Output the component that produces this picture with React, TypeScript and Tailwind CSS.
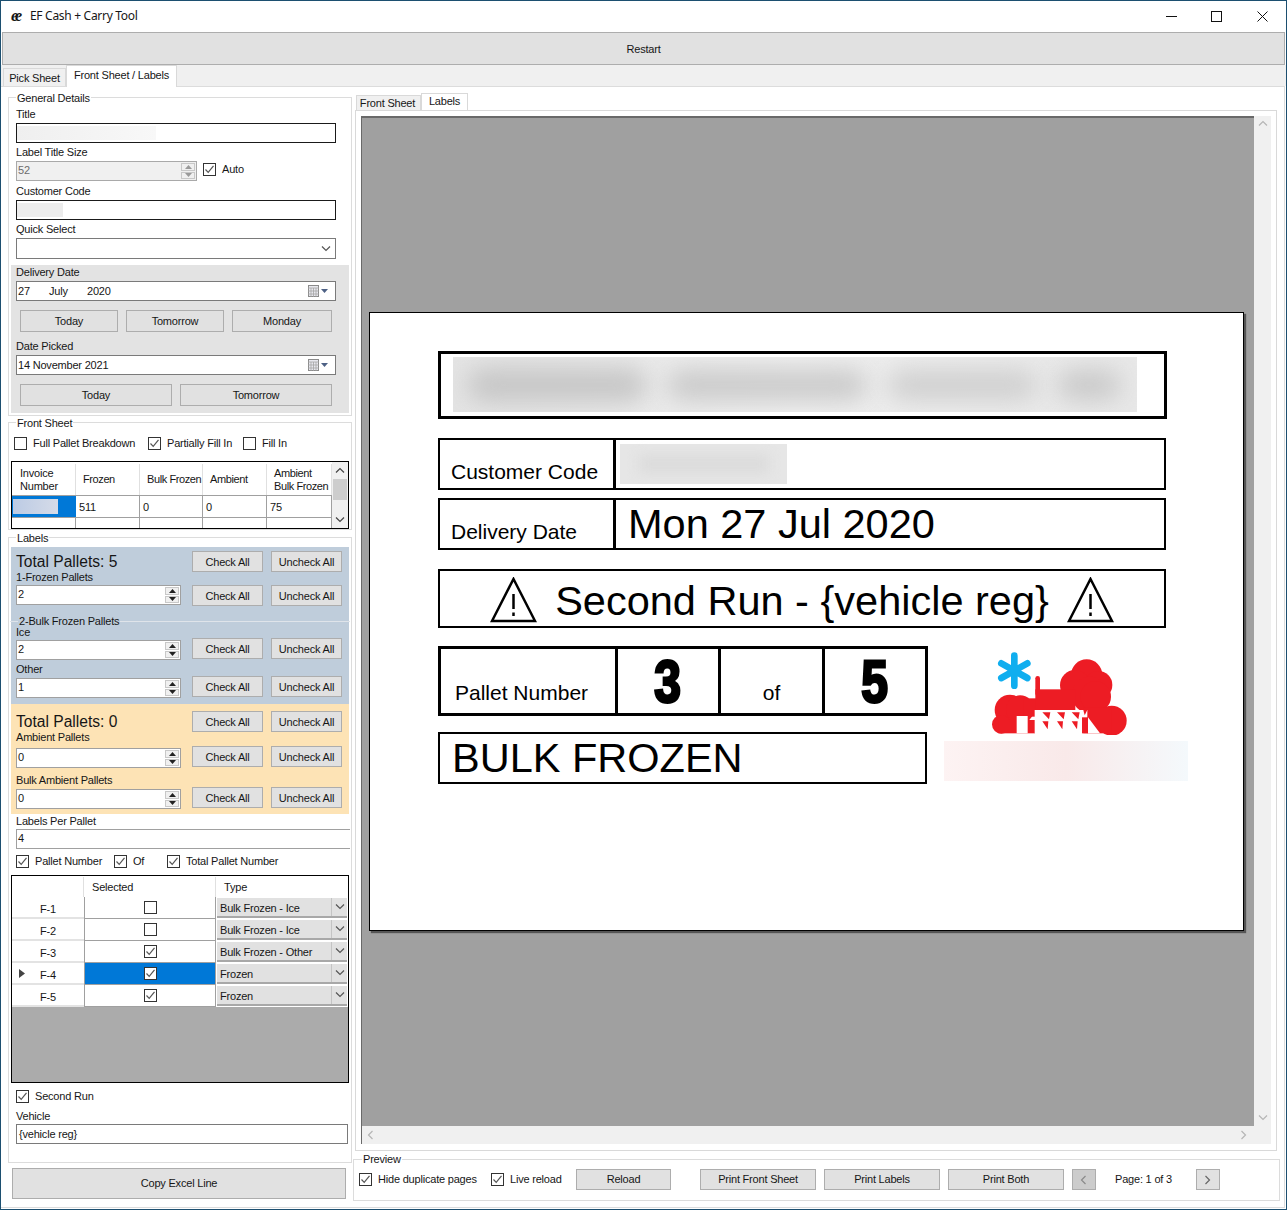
import type { ReactNode } from "react";

// EF Cash + Carry Tool: WinForms window, front sheet / labels tab

function Check({ on, className = "" }: { on?: boolean; className?: string }) {
  return (
    <span className={`flex h-[13px] w-[13px] shrink-0 items-center justify-center border border-[#333] bg-white ${className}`}>
      {on && (
        <svg width="11" height="11" viewBox="0 0 11 11" fill="none">
          <path d="M1.5 5.5 L4.2 8.4 L9.5 1.8" stroke="#555" strokeWidth="1.2" />
        </svg>
      )}
    </span>
  );
}

function CheckLabel({ on, text, className = "" }: { on?: boolean; text: string; className?: string }) {
  return (
    <div className={`flex h-[13px] items-center whitespace-nowrap ${className}`}>
      <Check on={on} />
      <span className="ml-[6px]">{text}</span>
    </div>
  );
}

function Btn({ children, className = "", bg = "bg-[#e1e1e1]" }: { children: ReactNode; className?: string; bg?: string }) {
  return (
    <div className={`flex shrink-0 items-center justify-center border border-[#adadad] ${bg} ${className}`}>
      {children}
    </div>
  );
}

function Chevron({ dir = "down", color = "#555" }: { dir?: "down" | "up" | "left" | "right"; color?: string }) {
  const d = {
    down: "M1 2.5 L5 6.5 L9 2.5",
    up: "M1 6.5 L5 2.5 L9 6.5",
    left: "M6.5 1 L2.5 5 L6.5 9",
    right: "M2.5 1 L6.5 5 L2.5 9",
  }[dir];
  return (
    <svg width="10" height="10" viewBox="0 0 10 10" fill="none">
      <path d={d} stroke={color} strokeWidth="1.2" />
    </svg>
  );
}

function Spinner({ disabled }: { disabled?: boolean }) {
  const fill = disabled ? "#9a9a9a" : "#222";
  return (
    <div className="flex h-full w-[15px] shrink-0 flex-col gap-px py-px pr-px">
      <div className="flex flex-1 items-center justify-center border border-[#c8c8c8] bg-[#f0f0f0]">
        <svg width="7" height="4" viewBox="0 0 7 4"><path d="M3.5 0 L7 4 L0 4 Z" fill={fill} /></svg>
      </div>
      <div className="flex flex-1 items-center justify-center border border-[#c8c8c8] bg-[#f0f0f0]">
        <svg width="7" height="4" viewBox="0 0 7 4"><path d="M0 0 L7 0 L3.5 4 Z" fill={fill} /></svg>
      </div>
    </div>
  );
}

function NumBox({ value, className = "" }: { value: string; className?: string }) {
  return (
    <div className={`flex h-[20px] w-[165px] shrink-0 items-center border border-[#a0a0a0] bg-white pl-[1px] ${className}`}>
      <span className="flex-1 -translate-y-px">{value}</span>
      <Spinner />
    </div>
  );
}

function DatePicker({ children, className = "" }: { children: ReactNode; className?: string }) {
  return (
    <div className={`ml-[5px] flex h-[20px] w-[320px] items-center border border-[#7a7a7a] bg-white pl-[1px] pr-[5px] ${className}`}>
      <span className="flex flex-1 whitespace-pre">{children}</span>
      <svg width="22" height="12" viewBox="0 0 22 12">
        <rect x="0.5" y="0.5" width="10" height="11" fill="#e8e8ee" stroke="#8a8a8a" />
        <path d="M0 3 H11 M3 3 V12 M5.500 3 V12 M8 3 V12 M0 6 H11 M0 9 H11" stroke="#a5a5a5" strokeWidth="0.8" />
        <path d="M13 4 H20 L16.500 8 Z" fill="#4d6185" />
      </svg>
    </div>
  );
}

function Group({ title, className = "", legendClass = "left-[7px] -top-[7px]", children }: { title: string; className?: string; legendClass?: string; children: ReactNode }) {
  return (
    <div className={`relative border border-[#dcdcdc] ${className}`}>
      <span className={`absolute bg-white px-[1px] leading-[14px] ${legendClass}`}>{title}</span>
      {children}
    </div>
  );
}

function CheckButtons() {
  return (
    <>
      <Btn className="h-[21px] w-[71px] pt-px">Check All</Btn>
      <Btn className="ml-[8px] h-[21px] w-[71px] pt-px">Uncheck All</Btn>
    </>
  );
}

function PalletRow({ value, inset = "mt-[2px]" }: { value: string; inset?: string }) {
  return (
    <div className="flex items-start pl-[5px]">
      <NumBox value={value} className={inset} />
      <div className="ml-[11px] flex">
        <CheckButtons />
      </div>
    </div>
  );
}

function Title({ text }: { text: string }) {
  return (
    <div className="flex items-start pl-[5px]">
      <span className="w-[176px] shrink-0 pt-px text-[15.6px] leading-[20px] tracking-normal">{text}</span>
      <CheckButtons />
    </div>
  );
}

const invoiceCols = [
  { head: "Frozen", val: "511", w: "w-[64px]" },
  { head: "Bulk Frozen", val: "0", w: "w-[63px]" },
  { head: "Ambient", val: "0", w: "w-[64px]" },
  { head: "Ambient\nBulk Frozen", val: "75", w: "w-[65px]" },
];

const pallets = [
  { id: "F-1", on: false, type: "Bulk Frozen - Ice" },
  { id: "F-2", on: false, type: "Bulk Frozen - Ice" },
  { id: "F-3", on: true, type: "Bulk Frozen - Other" },
  { id: "F-4", on: true, type: "Frozen", current: true },
  { id: "F-5", on: true, type: "Frozen" },
];

function LeftPanel() {
  return (
    <div className="w-[352px] shrink-0 pl-[7px] pt-[10px]">
      <Group title="General Details" className="w-[344px] pb-[2px]">
        <div className="ml-[7px] mt-[9px] h-[14px] leading-[14px]">Title</div>
        <div className="ml-[7px] mt-[2px] flex h-[20px] w-[320px] items-center border border-[#1a1a1a] bg-white">
          <div className="h-[14px] w-[139px] bg-gradient-to-r from-[#efefef] to-[#f8f8f8]" />
        </div>
        <div className="ml-[7px] mt-[2px] h-[14px] leading-[14px]">Label Title Size</div>
        <div className="mt-[2px] flex items-start pl-[7px]">
          <div className="flex h-[20px] w-[181px] items-center border border-[#a9a9a9] bg-[#f0f0f0] pl-[1px] text-[#6d6d6d]">
            <span className="flex-1 -translate-y-px">52</span>
            <Spinner disabled />
          </div>
          <CheckLabel on text="Auto" className="ml-[6px] mt-[2px]" />
        </div>
        <div className="ml-[7px] mt-[3px] h-[14px] leading-[14px]">Customer Code</div>
        <div className="ml-[7px] mt-[2px] flex h-[20px] w-[320px] items-center border border-[#1a1a1a] bg-white">
          <div className="h-[14px] w-[46px] bg-[#ececec]" />
        </div>
        <div className="ml-[7px] mt-[2px] h-[14px] leading-[14px]">Quick Select</div>
        <div className="ml-[7px] mt-[2px] flex h-[21px] w-[320px] items-center justify-end border border-[#7a7a7a] bg-white pr-[4px]">
          <Chevron />
        </div>
        <div className="mx-[2px] mt-[6px] h-[148px] bg-[#e3e3e3]">
          <div className="ml-[5px] h-[14px] leading-[14px]">Delivery Date</div>
          <DatePicker className="mt-[2px]">
            <span className="w-[31px]">27</span>
            <span className="w-[38px]">July</span>
            <span>2020</span>
          </DatePicker>
          <div className="ml-[9px] mt-[9px] flex gap-[8px]">
            <Btn className="h-[22px] w-[98px]">Today</Btn>
            <Btn className="h-[22px] w-[98px]">Tomorrow</Btn>
            <Btn className="h-[22px] w-[100px]">Monday</Btn>
          </div>
          <div className="ml-[5px] mt-[7px] h-[14px] leading-[14px]">Date Picked</div>
          <DatePicker className="mt-[2px]">14 November 2021</DatePicker>
          <div className="ml-[9px] mt-[9px] flex gap-[8px]">
            <Btn className="h-[22px] w-[152px]">Today</Btn>
            <Btn className="h-[22px] w-[152px]">Tomorrow</Btn>
          </div>
        </div>
      </Group>

      <Group title="Front Sheet" className="mt-[6px] w-[344px]">
        <div className="ml-[5px] mt-[14px] flex">
          <CheckLabel text="Full Pallet Breakdown" className="w-[134px]" />
          <CheckLabel on text="Partially Fill In" className="w-[95px]" />
          <CheckLabel text="Fill In" />
        </div>
        <div className="mx-[2px] mt-[11px] flex h-[68px] border border-black">
          <div className="flex w-[320px] flex-col">
            <div className="flex h-[34px] border-b border-[#a0a0a0] pt-[2px]">
              <div className="flex w-[64px] items-center whitespace-pre border-r border-[#e0e0e0] pl-[8px] leading-[13px]">{"Invoice\nNumber"}</div>
              {invoiceCols.map((c) => (
                <div key={c.head} className={`flex items-center whitespace-pre border-r border-[#e0e0e0] pl-[7px] leading-[13px] tracking-[-0.4px] ${c.w}`}>{c.head}</div>
              ))}
            </div>
            <div className="flex h-[22px] border-b border-[#a0a0a0]">
              <div className="flex w-[64px] items-center bg-[#0078d7] pl-px">
                <div className="h-[15px] w-[45px] bg-gradient-to-r from-[#bccbe4] to-[#d5dbe8]" />
              </div>
              {invoiceCols.map((c) => (
                <div key={c.head} className={`flex items-center border-r border-[#a0a0a0] pl-[3px] pt-px ${c.w}`}>{c.val}</div>
              ))}
            </div>
            <div className="flex flex-1">
              <div className="w-[64px] border-r border-[#a0a0a0]" />
              {invoiceCols.map((c) => (
                <div key={c.head} className={`border-r border-[#a0a0a0] ${c.w}`} />
              ))}
            </div>
          </div>
          <div className="flex flex-1 flex-col items-stretch bg-[#f0f0f0]">
            <div className="flex h-[17px] items-center justify-center"><Chevron dir="up" color="#444" /></div>
            <div className="mx-px h-[21px] bg-[#cdcdcd]" />
            <div className="flex-1" />
            <div className="flex h-[17px] items-center justify-center"><Chevron color="#444" /></div>
          </div>
        </div>
      </Group>

      <Group title="Labels" className="mt-[7px] h-[626px] w-[344px]">
        <div className="mx-[2px] mt-[9px] h-[157px] bg-[#bfcddb] pt-[4px]">
          <Title text="Total Pallets: 5" />
          <div className="ml-[5px] h-[13px] leading-[11px]">1-Frozen Pallets</div>
          <PalletRow value="2" inset="mt-0" />
          <div className="relative -mx-px mt-[15px] h-[83px] border-t border-[#dfe4ea] pl-px">
            <span className="absolute -top-[8px] left-[8px] bg-[#bfcddb] px-px leading-[14px]">2-Bulk Frozen Pallets</span>
            <div className="ml-[5px] mt-[3px] h-[13px] leading-[14px]">Ice</div>
            <PalletRow value="2" />
            <div className="ml-[5px] mt-[3px] h-[13px] leading-[12px]">Other</div>
            <PalletRow value="1" />
          </div>
        </div>
        <div className="mx-[2px] h-[110px] bg-[#fde3b5] pt-[7px]">
          <Title text="Total Pallets: 0" />
          <div className="ml-[5px] h-[14px] leading-[11px]">Ambient Pallets</div>
          <PalletRow value="0" />
          <div className="ml-[5px] mt-[6px] h-[13px] leading-[13px]">Bulk Ambient Pallets</div>
          <PalletRow value="0" />
        </div>
        <div className="ml-[7px] h-[14px] leading-[14px]">Labels Per Pallet</div>
        <div className="ml-[7px] mr-px mt-px flex h-[20px] items-center border-y border-l border-[#a0a0a0] bg-white pl-px"><span className="-translate-y-px">4</span></div>
        <div className="ml-[7px] mt-[6px] flex">
          <CheckLabel on text="Pallet Number" className="w-[98px]" />
          <CheckLabel on text="Of" className="w-[53px]" />
          <CheckLabel on text="Total Pallet Number" />
        </div>
        <div className="mx-[2px] mt-[7px] flex h-[208px] flex-col border border-black bg-[#ababab]">
          <div className="flex h-[21px] bg-white pt-px">
            <div className="w-[72px] border-r border-[#e0e0e0]" />
            <div className="flex w-[132px] items-center border-r border-[#e0e0e0] pl-[8px]">Selected</div>
            <div className="flex flex-1 items-center pl-[8px]">Type</div>
          </div>
          {pallets.map((p) => (
            <div key={p.id} className="flex h-[22px]">
              <div className="relative flex w-[72px] items-center border-b-2 border-[#e3e3e3] bg-white pl-[28px] pt-[4px]">
                {p.current && (
                  <svg className="absolute left-[7px] top-[6px]" width="6" height="9" viewBox="0 0 6 9"><path d="M0 0 L6 4.500 L0 9 Z" fill="#444" /></svg>
                )}
                {p.id}
              </div>
              <div className={`flex w-[132px] items-center justify-center border-x border-b border-[#a0a0a0] ${p.current ? "bg-[#0078d7]" : "bg-white"}`}>
                <Check on={p.on} />
              </div>
              <div className="flex flex-1 bg-white">
                <div className="m-px flex flex-1 items-center border-b-2 border-[#a8a8a8] bg-[#e1e1e1] pl-[3px]">
                  <span className="flex-1 whitespace-nowrap pt-[2px]">{p.type}</span>
                  <span className="flex h-full w-[16px] items-center justify-center border-l border-[#c4c4c4]"><Chevron /></span>
                </div>
              </div>
            </div>
          ))}
        </div>
        <CheckLabel on text="Second Run" className="ml-[7px] mt-[7px]" />
        <div className="ml-[7px] mt-[6px] h-[14px] leading-[14px]">Vehicle</div>
        <div className="ml-[7px] mt-px flex h-[20px] w-[332px] items-center border border-[#7a7a7a] bg-white pl-[2px]">{"{vehicle reg}"}</div>
      </Group>

      <Btn className="ml-[4px] mt-[5px] h-[31px] w-[334px]">Copy Excel Line</Btn>
    </div>
  );
}

function Warning() {
  return (
    <svg width="47" height="46" viewBox="0 0 47 46" fill="none">
      <path d="M23.500 2 L45 44 L2 44 Z" stroke="#000" strokeWidth="2.500" />
      <path d="M23.500 17 V32" stroke="#000" strokeWidth="2.500" />
      <path d="M23.500 35.500 V39" stroke="#000" strokeWidth="2.500" />
    </svg>
  );
}

function Logo() {
  return (
    <svg width="140" height="85" viewBox="180 60 420 255">
      <g stroke="#10aeef" strokeWidth="20" strokeLinecap="round">
        <path d="M253 77 V167 M214 100 L292 144 M292 100 L214 144" />
      </g>
      <g fill="#ed1c24">
        <circle cx="240" cy="240" r="46" />
        <circle cx="214" cy="283" r="28" />
        <circle cx="270" cy="238" r="42" />
        <circle cx="470" cy="135" r="47" />
        <circle cx="435" cy="165" r="45" />
        <circle cx="505" cy="165" r="42" />
        <circle cx="480" cy="195" r="55" />
        <circle cx="497" cy="200" r="46" />
        <circle cx="545" cy="272" r="45" />
        <rect x="205" y="270" width="110" height="40" />
        <rect x="280" y="205" width="40" height="55" />
        <rect x="316" y="138" width="14" height="60" rx="7" />
        <rect x="316" y="178" width="120" height="70" />
        <rect x="460" y="232" width="85" height="78" />
      </g>
      <rect x="260" y="258" width="33" height="52" fill="#fff" />
      <rect x="314" y="240" width="158" height="70" fill="#fff" />
      <path d="M474 262 L510 310 L474 310 Z" fill="#fff" />
      <rect x="456" y="262" width="18" height="48" fill="#ed1c24" />
      <g fill="#ed1c24">
        <path d="M337 247 H361 L357 268 Z M381 247 H405 L401 268 Z M425 247 H449 L445 268 Z" />
        <path d="M337 274 L355 274 L353 298 Z M381 274 L399 274 L397 298 Z M425 274 L443 274 L441 298 Z" />
        <path d="M460 240 H472 L464 256 Z" />
      </g>
    </svg>
  );
}

function LabelPage() {
  return (
    <div className="h-[619px] w-[875px] border border-black bg-white pl-[68px] pt-[38px] tracking-normal text-black shadow-[2px_2px_1px_#555]">
      <div className="flex h-[68px] w-[729px] items-center border-[3px] border-black pl-[12px]">
        <div className="relative flex h-[55px] w-[684px] items-center gap-[20px] overflow-hidden bg-gradient-to-r from-[#e4e4e4] via-[#efefef] to-[#e8e8e8] px-[14px]">
          <div className="h-[34px] w-[180px] rounded-full bg-[#c6c6c6] blur-[12px]" />
          <div className="h-[30px] w-[200px] rounded-full bg-[#c9c9c9] blur-[12px]" />
          <div className="h-[30px] w-[150px] rounded-full bg-[#cfcfcf] blur-[12px]" />
          <div className="h-[30px] w-[64px] rounded-full bg-[#c9c9c9] blur-[12px]" />
        </div>
      </div>
      <div className="mt-[19px] flex h-[52px] w-[728px] border-2 border-black">
        <div className="flex w-[173px] items-end pb-[4px] pl-[11px] text-[21px] leading-[24px]">Customer Code</div>
        <div className="flex flex-1 items-center border-l-[3px] border-black pl-[4px]">
          <div className="flex h-[40px] w-[167px] items-center justify-center bg-[#e6e6e6]">
            <div className="h-[20px] w-[130px] bg-[#dcdcdc] blur-[6px]" />
          </div>
        </div>
      </div>
      <div className="mt-[8px] flex h-[52px] w-[728px] border-2 border-black">
        <div className="flex w-[173px] items-end pb-[4px] pl-[11px] text-[21px] leading-[24px]">Delivery Date</div>
        <div className="flex flex-1 items-center border-l-[3px] border-black pl-[12px] pt-px text-[41.5px] leading-[46px]">Mon 27 Jul 2020</div>
      </div>
      <div className="mt-[19px] flex h-[59px] w-[728px] items-center justify-center gap-[18px] border-2 border-black pt-[4px] text-[41.5px] leading-[46px]">
        <Warning />
        <span className="pt-px">Second Run - {"{vehicle reg}"}</span>
        <Warning />
      </div>
      <div className="mt-[18px] flex">
        <div className="w-[490px]">
          <div className="flex h-[70px] border-[3px] border-black">
            <div className="flex w-[174px] items-end pb-[8px] pl-[14px] text-[21px] leading-[24px]">Pallet Number</div>
            <div className="flex w-[103px] items-center justify-center border-l-[3px] border-black pt-[3px] text-[60px] font-bold [-webkit-text-stroke:3px_#000]">
              <span className="inline-block scale-x-[0.8]">3</span>
            </div>
            <div className="flex w-[104px] items-end justify-center border-l-[3px] border-black pb-[8px] text-[21px] leading-[24px]">of</div>
            <div className="flex flex-1 items-center justify-center border-l-[3px] border-black pt-[3px] text-[60px] font-bold [-webkit-text-stroke:3px_#000]">
              <span className="inline-block scale-x-[0.8]">5</span>
            </div>
          </div>
          <div className="mt-[16px] flex h-[52px] w-[489px] items-center border-2 border-black pl-[12px] pt-px text-[41.5px] leading-[46px]">BULK FROZEN</div>
        </div>
        <div className="ml-[16px]">
          <div className="ml-[46px] mt-[4px]"><Logo /></div>
          <div className="mt-[6px] h-[40px] w-[244px] bg-gradient-to-r from-[#fdf3f3] via-[#f9e9e9] to-[#f4f9fc]" />
        </div>
      </div>
    </div>
  );
}

function RightPanel() {
  return (
    <div className="flex-1 pt-[6px]">
      <div className="ml-[3px] flex h-[17px] items-end">
        <div className="flex h-[15px] w-[65px] items-center justify-center border border-b-0 border-[#d9d9d9] bg-[#f0f0f0] pr-[2px]">Front Sheet</div>
        <div className="flex h-[17px] w-[47px] items-center justify-center border border-b-0 border-[#d9d9d9] bg-white pb-[2px]">Labels</div>
      </div>
      <div className="ml-[2px] h-[1041px] w-[922px] border border-[#d9d9d9] pl-[5px] pt-[5px]">
        <div className="flex h-[1028px] w-[910px] flex-col">
          <div className="flex h-[1010px]">
            <div className="flex w-[893px] items-center justify-center border-l border-t-2 border-[#696969] bg-[#a0a0a0] pb-[2px] pr-[3px]">
              <LabelPage />
            </div>
            <div className="flex flex-1 flex-col items-center justify-between bg-[#f0f0f0] py-[3px]">
              <Chevron dir="up" color="#b5b5b5" />
              <Chevron color="#b5b5b5" />
            </div>
          </div>
          <div className="flex flex-1 items-center justify-between border-l border-[#696969] bg-[#f0f0f0] pl-[4px] pr-[22px]">
            <Chevron dir="left" color="#b5b5b5" />
            <Chevron dir="right" color="#b5b5b5" />
          </div>
        </div>
      </div>
      <Group title="Preview" className="mt-[8px] h-[42px] w-[927px]" legendClass="left-[8px] -top-[8px]">
        <div className="flex items-center pl-[5px] pt-[9px]">
          <CheckLabel on text="Hide duplicate pages" className="w-[132px]" />
          <CheckLabel on text="Live reload" className="w-[85px]" />
          <Btn className="h-[21px] w-[95px]">Reload</Btn>
          <Btn className="ml-[29px] h-[21px] w-[116px]">Print Front Sheet</Btn>
          <Btn className="ml-[8px] h-[21px] w-[116px]">Print Labels</Btn>
          <Btn className="ml-[8px] h-[21px] w-[116px]">Print Both</Btn>
          <Btn className="ml-[8px] h-[21px] w-[24px]" bg="bg-[#cccccc]"><Chevron dir="left" color="#8a8a8a" /></Btn>
          <span className="ml-[19px] w-[81px] whitespace-nowrap">Page: 1 of 3</span>
          <Btn className="h-[21px] w-[24px]"><Chevron dir="right" color="#666" /></Btn>
        </div>
      </Group>
    </div>
  );
}

export default function App() {
  return (
    <div className="flex h-[1210px] w-[1287px] flex-col border border-[#1c4f70] bg-white font-['Liberation_Sans',Arial,sans-serif] text-[11px] tracking-[-0.2px] text-[#161616]">
      <div className="flex h-[31px] shrink-0 items-center pb-px">
        <span className="ml-[10px] w-[19px] font-['Liberation_Serif',serif] text-[16px] font-bold italic leading-none tracking-[-3px]">ee</span>
        <span className="text-[12px] tracking-[-0.3px] font-['Noto_Sans',sans-serif]">EF Cash + Carry Tool</span>
        <div className="ml-auto flex items-center pt-px">
          <svg width="11" height="11" viewBox="0 0 11 11" className="mr-[34px]"><path d="M0 5.500 H11" stroke="#111" /></svg>
          <svg width="11" height="11" viewBox="0 0 11 11" className="mr-[35px]"><rect x="0.500" y="0.500" width="10" height="10" fill="none" stroke="#111" /></svg>
          <svg width="11" height="11" viewBox="0 0 11 11" className="mr-[18px]"><path d="M0.500 0.500 L10.500 10.500 M10.500 0.500 L0.500 10.500" stroke="#111" /></svg>
        </div>
      </div>
      <Btn className="mx-px h-[33px] pt-px">Restart</Btn>
      <div className="flex h-[21px] shrink-0 items-end bg-[#f0f0f0] pl-[2px]">
        <div className="flex h-[18px] w-[63px] items-center justify-center border border-b-0 border-[#d9d9d9] pt-px">Pick Sheet</div>
        <div className="relative z-10 -mb-px flex h-[22px] w-[111px] items-center justify-center border border-b-0 border-[#d9d9d9] bg-white pb-[2px]">Front Sheet / Labels</div>
      </div>
      <div className="mr-px flex flex-1 border-y border-r border-[#dcdcdc]">
        <LeftPanel />
        <RightPanel />
      </div>
      <div className="h-px" />
    </div>
  );
}
